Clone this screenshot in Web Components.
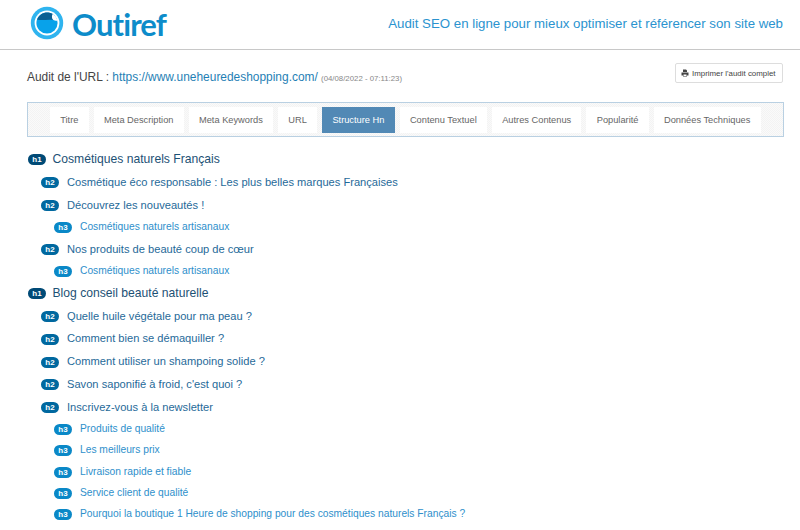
<!DOCTYPE html>
<html lang="fr">
<head>
<meta charset="utf-8">
<title>Outiref</title>
<style>
html, body { margin: 0; padding: 0; background: #fff; font-family: "Liberation Sans", Arial, sans-serif; }
body { height: 530px; overflow: hidden; }
</style>
</head>
<body>
<site-header>Audit SEO en ligne pour mieux optimiser et référencer son site web</site-header>
<audit-bar url="https://www.uneheuredeshopping.com/" date="(04/08/2022 - 07:11:23)"></audit-bar>
<tab-bar>
  <tab-item>Titre</tab-item>
  <tab-item>Meta Description</tab-item>
  <tab-item>Meta Keywords</tab-item>
  <tab-item>URL</tab-item>
  <tab-item active>Structure Hn</tab-item>
  <tab-item>Contenu Textuel</tab-item>
  <tab-item>Autres Contenus</tab-item>
  <tab-item>Popularité</tab-item>
  <tab-item>Données Techniques</tab-item>
</tab-bar>
<hn-list>
  <hn-row level="1">Cosmétiques naturels Français</hn-row>
  <hn-row level="2">Cosmétique éco responsable : Les plus belles marques Françaises</hn-row>
  <hn-row level="2">Découvrez les nouveautés !</hn-row>
  <hn-row level="3">Cosmétiques naturels artisanaux</hn-row>
  <hn-row level="2">Nos produits de beauté coup de cœur</hn-row>
  <hn-row level="3">Cosmétiques naturels artisanaux</hn-row>
  <hn-row level="1">Blog conseil beauté naturelle</hn-row>
  <hn-row level="2">Quelle huile végétale pour ma peau ?</hn-row>
  <hn-row level="2">Comment bien se démaquiller ?</hn-row>
  <hn-row level="2">Comment utiliser un shampoing solide ?</hn-row>
  <hn-row level="2">Savon saponifié à froid, c'est quoi ?</hn-row>
  <hn-row level="2">Inscrivez-vous à la newsletter</hn-row>
  <hn-row level="3">Produits de qualité</hn-row>
  <hn-row level="3">Les meilleurs prix</hn-row>
  <hn-row level="3">Livraison rapide et fiable</hn-row>
  <hn-row level="3">Service client de qualité</hn-row>
  <hn-row level="3">Pourquoi la boutique 1 Heure de shopping pour des cosmétiques naturels Français ?</hn-row>
</hn-list>
<script>
class SiteHeader extends HTMLElement {
  constructor() {
    super();
    this.attachShadow({ mode: "open" });
    this.shadowRoot.innerHTML = `
<style>
:host { display: flex; align-items: center; justify-content: space-between; height: 49px; padding: 0 17px 0 30px; border-bottom: 1px solid #c8c8c8; }
.logo { display: flex; align-items: center; gap: 8px; margin-top: -3px; }
.name { font: bold 31px Lato, sans-serif; letter-spacing: -0.9px; color: #0d8cca; line-height: 46px; padding-top: 1px; }
.tag { font-size: 13.26px; color: #2a93cf; margin-top: -2px; }
</style>
<div class="logo">
  <svg width="34" height="34" viewBox="0 0 34 34">
    <circle cx="17" cy="17" r="16.2" fill="#2fb4ef"/>
    <circle cx="17" cy="17" r="12.4" fill="#fff"/>
    <circle cx="17" cy="17" r="10.6" fill="#08a2ea"/>
    <path d="M7 13.5 C9 9 13 6.4 17 6.4 C19.5 6.4 21.5 7 23 8 C22 10 22 12 23.5 14 C18 12.8 12 15 7 13.5Z" fill="#0b5f92"/>
    <path d="M22.6 8 C25 9.5 26.8 12 27.4 14.5 C25.5 15 23.5 14.6 22.5 13 C21.7 11.4 21.8 9.5 22.6 8Z" fill="#fff"/>
  </svg>
  <span class="name">Outiref</span>
</div>
<span class="tag"><slot></slot></span>`;
  }
}
customElements.define("site-header", SiteHeader);

class AuditBar extends HTMLElement {
  constructor() {
    super();
    this.attachShadow({ mode: "open" });
  }
  connectedCallback() {
    this.shadowRoot.innerHTML = `
<style>
:host { display: flex; align-items: center; justify-content: space-between; height: 52px; padding: 0 17px 0 27px; }
.t { font-size: 11.93px; color: #444; padding-top: 1px; }
a { color: #1f7fb5; text-decoration: none; }
small { font-size: 7.8px; color: #888; }
button { display: flex; align-items: center; gap: 3px; width: 108px; height: 20px; padding: 0 0 0 5px; margin-top: -6px; background: #fff; border: 1px solid #ddd; border-radius: 2px; font: 7.9px "Liberation Sans", sans-serif; color: #444; }
</style>
<div class="t">Audit de l'URL : <a href="#">${this.getAttribute("url")}</a> <small>${this.getAttribute("date")}</small></div>
<button>
  <svg width="8" height="8" viewBox="0 0 16 16"><path fill="#444" d="M4 1h6l2 2v3H4zM1 7h14v6h-3v2H4v-2H1zM5 11v3h6v-3z"/></svg>
  Imprimer l'audit complet
</button>`;
  }
}
customElements.define("audit-bar", AuditBar);

class TabBar extends HTMLElement {
  constructor() {
    super();
    this.attachShadow({ mode: "open" });
    this.shadowRoot.innerHTML = `
<style>
:host { display: flex; gap: 5px; height: 26px; margin: 0 16px 0 27px; padding: 4px 0 3px 22px; border: 1px solid #b9d0e2; background: repeating-conic-gradient(#f3f3f3 0 25%, #fafafa 0 50%) 0 0 / 2px 2px; }
</style>
<slot></slot>`;
  }
}
customElements.define("tab-bar", TabBar);

class TabItem extends HTMLElement {
  constructor() {
    super();
    this.attachShadow({ mode: "open" });
    this.shadowRoot.innerHTML = `
<style>
:host { display: flex; align-items: center; padding: 0 10.25px 1px; background: #fff; font-size: 9.28px; color: #666; }
:host([active]) { background: #5289b5; color: #fff; }
</style>
<slot></slot>`;
  }
}
customElements.define("tab-item", TabItem);

class HnList extends HTMLElement {
  constructor() {
    super();
    this.attachShadow({ mode: "open" });
    this.shadowRoot.innerHTML = `
<style>
:host { display: block; padding: 10.4px 0 0 27px; }
</style>
<slot></slot>`;
  }
}
customElements.define("hn-list", HnList);

class HnRow extends HTMLElement {
  constructor() {
    super();
    this.attachShadow({ mode: "open" });
  }
  connectedCallback() {
    const level = this.getAttribute("level");
    this.shadowRoot.innerHTML = `
<style>
:host { display: flex; align-items: center; gap: var(--gap); height: var(--h); padding-left: var(--ind); }
:host([level="1"]) { --h: 23px; --ind: 1px; --gap: 6.5px; --bg: #004a76; --txt: #1d5175; --fs: 12.15px; }
:host([level="2"]) { --h: 22.75px; --ind: 14px; --gap: 8px; --bg: #00689f; --txt: #1f6a99; --fs: 11.14px; }
:host([level="3"]) { --h: 21.25px; --ind: 27px; --gap: 8px; --bg: #0a88c7; --txt: #2e8fcb; --fs: 10.25px; }
b { display: flex; align-items: center; justify-content: center; width: 18px; height: 11px; margin-top: 2px; border-radius: 6px; background: var(--bg); color: #fff; font-size: 8px; }
span { font-size: var(--fs); color: var(--txt); }
</style>
<b>h${level}</b><span><slot></slot></span>`;
  }
}
customElements.define("hn-row", HnRow);
</script>
</body>
</html>
